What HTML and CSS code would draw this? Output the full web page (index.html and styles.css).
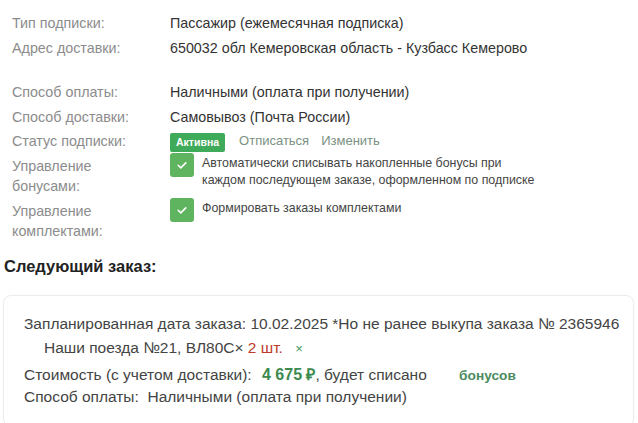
FILE: index.html
```html
<!DOCTYPE html>
<html lang="ru">
<head>
<meta charset="utf-8">
<link rel="stylesheet" href="styles.css">
</head>
<body>
<div class="info">
  <div class="row"><div class="label">Тип подписки:</div><div class="value">Пассажир (ежемесячная подписка)</div></div>
  <div class="row"><div class="label">Адрес доставки:</div><div class="value">650032 обл Кемеровская область - Кузбасс Кемерово</div></div>
  <div class="spacer"></div>
  <div class="row"><div class="label">Способ оплаты:</div><div class="value">Наличными (оплата при получении)</div></div>
  <div class="row"><div class="label">Способ доставки:</div><div class="value">Самовывоз (Почта России)</div></div>
  <div class="row"><div class="label">Статус подписки:</div><div class="value status"><span class="badge">Активна</span><a class="link">Отписаться</a><a class="link">Изменить</a></div></div>
  <div class="row tall"><div class="label two">Управление<br>бонусами:</div><div class="value check-row"><span class="check"><svg width="24" height="24" viewBox="0 0 24 24"><path d="M8.2 12.3l2.6 2.6 5-5" fill="none" stroke="#fff" stroke-width="1.6" stroke-linecap="round" stroke-linejoin="round"/></svg></span><span class="check-text">Автоматически списывать накопленные бонусы при<br>каждом последующем заказе, оформленном по подписке</span></div></div>
  <div class="row tall"><div class="label two">Управление<br>комплектами:</div><div class="value check-row"><span class="check"><svg width="24" height="24" viewBox="0 0 24 24"><path d="M8.2 12.3l2.6 2.6 5-5" fill="none" stroke="#fff" stroke-width="1.6" stroke-linecap="round" stroke-linejoin="round"/></svg></span><span class="check-text">Формировать заказы комплектами</span></div></div>
</div>
<h2 class="next-title">Следующий заказ:</h2>
<div class="card">
  <div class="line l1">Запланированная дата заказа: 10.02.2025 *Но не ранее выкупа заказа № 2365946</div>
  <div class="line l2">Наши поезда №21, ВЛ80С× <span class="qty">2 шт.</span> <span class="remove">×</span></div>
  <div class="line l3">Стоимость (с учетом доставки): <b class="price">4 675 ₽</b>, будет списано <b class="bonus">бонусов</b></div>
  <div class="line l4">Способ оплаты: &nbsp;Наличными (оплата при получении)</div>
</div>
</body>
</html>
```
FILE: styles.css
```css
html, body {
  margin: 0;
  padding: 0;
  background: #fff;
}
body {
  font-family: "Liberation Sans", Arial, sans-serif;
  color: #333;
  width: 638px;
  height: 423px;
  overflow: hidden;
}
.info {
  padding: 11px 0 0 12px;
}
.row {
  display: flex;
  line-height: 24.5px;
  font-size: 14.3px;
}
.label {
  width: 158px;
  flex: none;
  color: #8c8c8c;
}
.value {
  color: #333;
}
.spacer {
  height: 20px;
}
.status {
  display: flex;
  align-items: center;
}
.badge {
  display: inline-block;
  background: #3faa5a;
  color: #fff;
  font-size: 10.5px;
  font-weight: bold;
  line-height: 19px;
  padding: 0 6px;
  border-radius: 2px;
  margin-right: 14px;
  margin-top: 3px;
}
.link {
  color: #7b9182;
  font-size: 13px;
  margin-right: 12px;
}
.row.tall {
  margin-top: 0;
  margin-bottom: 3px;
}
.label.two {
  line-height: 20px;
  padding-top: 2px;
}
.check-row {
  display: flex;
  align-items: flex-start;
}
.check {
  width: 24px;
  height: 24px;
  flex: none;
  background: #5fb460;
  border-radius: 3px;
  margin-right: 8px;
  margin-top: -1px;
}
.check svg {
  display: block;
}
.check-text {
  font-size: 12.4px;
  line-height: 17px;
  color: #444;
  padding-top: 1px;
}
.next-title {
  margin: 15px 0 0 4px;
  font-size: 16.5px;
  font-weight: bold;
  color: #222;
  line-height: 20px;
}
.card {
  margin: 19px 4px 0 3px;
  border: 1px solid #ececec;
  border-radius: 8px;
  padding: 16px 0 20px 20px;
  font-size: 15.5px;
  color: #444;
  box-shadow: 0 0 2px rgba(0,0,0,0.04);
}
.line {
  line-height: 24px;
  white-space: nowrap;
}
.l2 {
  padding-left: 20px;
}
.l3 {
  margin-top: 2px;
  line-height: 24px;
}
.l4 {
  line-height: 18px;
}
.qty {
  color: #c0392b;
}
.remove {
  color: #3f9a5a;
  font-size: 13px;
  margin-left: 8px;
}
.price {
  color: #3c8a50;
  font-size: 16px;
  margin-left: 6px;
}
.bonus {
  color: #4a8a5e;
  font-size: 13.7px;
  margin-left: 28px;
}
```
